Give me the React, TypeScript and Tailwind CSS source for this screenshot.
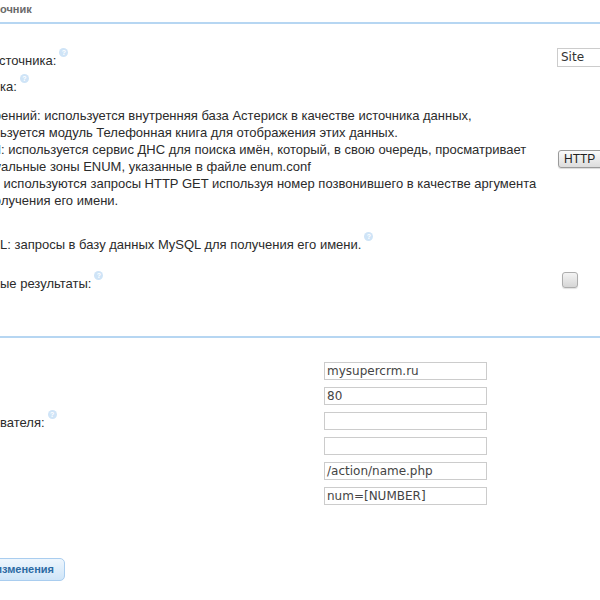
import React from "react";

// The view is scrolled: the left part of every label sits off-screen.
// `pre` is the hidden start of the text, `w` sets where the visible rest begins.
const Cut = ({ pre, w, children }: { pre: string; w: string; children: React.ReactNode }) => (
  <>
    <span className={`-ml-[200px] inline-flex justify-end whitespace-nowrap ${w}`}>{pre}</span>
    {children}
  </>
);

const Help = () => (
  <span className="relative -top-[4px] ml-[3px] inline-block h-[9px] w-[9px] rounded-full bg-[#cfe4f7] text-center align-top text-[7px] font-bold leading-[9px] text-white">
    ?
  </span>
);

const TextInput = ({ value }: { value: string }) => (
  <div className="h-[18px] w-[163px] border border-[#cccccc] bg-white pl-[2px] font-['DejaVu_Sans',sans-serif] text-[12px] leading-[16px] text-[#444]">
    {value}
  </div>
);

const sources = [
  { pre: "Внутр", w: "w-[201px]", text: "енний: используется внутренняя база Астериск в качестве источника данных," },
  { pre: "испол", w: "w-[200px]", text: "ьзуется модуль Телефонная книга для отображения этих данных." },
  { pre: "ENUM", w: "w-[201px]", text: ": используется сервис ДНС для поиска имён, который, в свою очередь, просматривает" },
  { pre: "вирту", w: "w-[201px]", text: "альные зоны ENUM, указанные в файле enum.conf" },
  { pre: "HTTP:", w: "w-[200px]", text: "\u00a0используются запросы HTTP GET используя номер позвонившего в качестве аргумента" },
  { pre: "для по", w: "w-[201px]", text: "лучения его имени." },
];

const httpFields = [
  { pre: "Хост:", text: "", value: "mysupercrm.ru" },
  { pre: "Порт:", text: "", value: "80" },
  { pre: "Имя пользо", text: "вателя:", value: "", help: true },
  { pre: "Пароль:", text: "", value: "" },
  { pre: "Путь:", text: "", value: "/action/name.php" },
  { pre: "Запрос:", text: "", value: "num=[NUMBER]" },
];

export default function App() {
  return (
    <div className="h-[600px] w-[600px] overflow-hidden bg-white font-['Liberation_Sans',Arial,sans-serif] text-[13px] text-[#2b2b2b]">
      {/* heading */}
      <div className="h-[22px] pt-[3px] text-[11px] font-bold leading-[12px] text-[#6a6a6a]">
        <Cut pre="Изменить ист" w="w-[200px]">
          очник
        </Cut>
      </div>
      <div className="h-[2px] bg-[#b6d6f2]" />

      {/* source */}
      <div className="grid grid-cols-[557px_1fr] pt-[24px] pb-[44px] leading-[17px]">
        <div className="whitespace-nowrap pt-[4px]">
          <Cut pre="Описание и" w="w-[199px]">
            сточника:
          </Cut>
          <Help />
        </div>
        <div className="h-[19px] w-[162px] border border-[#cccccc] pl-[3px] font-['DejaVu_Sans',sans-serif] text-[12px] leading-[17px] text-[#333]">
          Site
        </div>

        <div className="mt-[9px] whitespace-nowrap">
          <div>
            <Cut pre="Тип источни" w="w-[200px]">
              ка:
            </Cut>
            <Help />
          </div>
          <ul className="mt-[12px]">
            {sources.map((s) => (
              <li key={s.pre}>
                <Cut pre={s.pre} w={s.w}>
                  {s.text}
                </Cut>
              </li>
            ))}
            <li className="mt-[27px]">
              <Cut pre="MySQ" w="w-[200px]">
                L: запросы в базу данных MySQL для получения его имени.
              </Cut>
              <Help />
            </li>
          </ul>
        </div>
        <div className="mt-[81px] self-start pl-[1px]">
          <div className="h-[18px] w-[80px] rounded-[3px] border border-[#9a9a9a] bg-gradient-to-b from-[#fbfbfb] to-[#dcdcdc] pl-[5px] text-[12px] leading-[16px] text-[#222] shadow-[0_1px_1px_rgba(0,0,0,0.15)]">
            HTTP
          </div>
        </div>

        <div className="mt-[22px] whitespace-nowrap">
          <Cut pre="Кэшированн" w="w-[200px]">
            ые результаты:
          </Cut>
          <Help />
        </div>
        <div className="mt-[19px] self-start pl-[5px]">
          <div className="h-[16px] w-[16px] rounded-[3px] border border-[#adadad] bg-gradient-to-b from-[#f4f4f4] to-[#d6d6d6] shadow-[0_1px_1px_rgba(0,0,0,0.12)]" />
        </div>
      </div>
      <div className="h-[2px] bg-[#b6d6f2]" />

      {/* http settings */}
      <div className="flex flex-col gap-[7px] pt-[24px]">
        {httpFields.map((f) => (
          <div key={f.pre} className="grid h-[18px] grid-cols-[324px_1fr] items-start">
            <div className="whitespace-nowrap pt-[2px] leading-[18px]">
              <Cut pre={f.pre} w="w-[200px]">
                {f.text}
              </Cut>
              {f.help && <Help />}
            </div>
            <TextInput value={f.value} />
          </div>
        ))}
      </div>

      <div className="mt-[53px]">
        <button className="-ml-[200px] h-[23px] whitespace-nowrap rounded-[5px] border border-[#a9cdef] bg-gradient-to-b from-[#eef6fd] to-[#cfe5f8] pr-[10px] text-[11px] font-bold leading-[21px] text-[#2c6aa3]">
          <span className="inline-flex w-[201px] justify-end">Сохранить и</span>
          зменения
        </button>
      </div>
    </div>
  );
}
